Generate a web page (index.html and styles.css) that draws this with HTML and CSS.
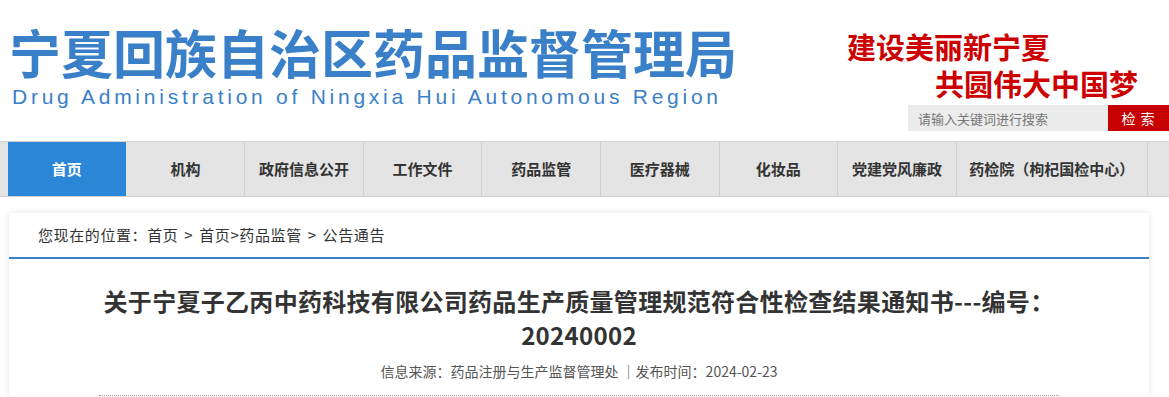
FILE: index.html
```html
<!DOCTYPE html>
<html lang="zh-CN">
<head>
    <meta charset="UTF-8">
    <meta name="viewport" content="width=device-width, initial-scale=1.0">
    <title>宁夏回族自治区药品监督管理局</title>
    <link rel="stylesheet" href="styles.css">
</head>
<body>

    <div class="header">
        <div class="logo">
            <div class="logo-cn">宁夏回族自治区药品监督管理局</div>
            <div class="logo-en">Drug Administration of Ningxia Hui Autonomous Region</div>
        </div>
        <div class="header-right">
            <div class="slogan">
                <div class="slogan-line1">建设美丽新宁夏</div>
                <div class="slogan-line2">共圆伟大中国梦</div>
            </div>
            <div class="search">
                <input class="search-input" type="text" placeholder="请输入关键词进行搜索">
                <button class="search-button">检 索</button>
            </div>
        </div>
    </div>

    <div class="nav">
        <ul class="nav-list">
            <li class="nav-item active">首页</li>
            <li class="nav-item">机构</li>
            <li class="nav-item">政府信息公开</li>
            <li class="nav-item">工作文件</li>
            <li class="nav-item">药品监管</li>
            <li class="nav-item">医疗器械</li>
            <li class="nav-item">化妆品</li>
            <li class="nav-item">党建党风廉政</li>
            <li class="nav-item wide">药检院（枸杞国检中心）</li>
        </ul>
    </div>

    <div class="content">
        <div class="breadcrumb">您现在的位置：首页 &gt; 首页&gt;药品监管 &gt; 公告通告</div>
        <div class="article">
            <h1 class="article-title">关于宁夏子乙丙中药科技有限公司药品生产质量管理规范符合性检查结果通知书---编号：20240002</h1>
            <div class="article-meta">信息来源：药品注册与生产监督管理处 ｜发布时间：2024-02-23</div>
        </div>
    </div>

</body>
</html>
```

FILE: styles.css
```css
/* Общие стили */
body {
    margin: 0;
    padding: 0;
    background-color: #fff;
    font-family: "Noto Sans CJK SC", "Liberation Sans", sans-serif;
    color: #333;
}

/* Шапка */
.header {
    display: flex;
    justify-content: space-between;
    height: 141px;
}

.logo {
    padding: 25px 0 0 9px;
}

.logo-cn {
    font-size: 52px;
    font-weight: 700;
    color: #3a80c9;
    line-height: 54px;
}

.logo-en {
    font-family: "Liberation Sans", sans-serif;
    font-size: 21px;
    color: #3a80c9;
    letter-spacing: 3.75px;
    line-height: 22px;
    margin-top: 7px;
    padding-left: 3px;
}

.header-right {
    display: flex;
    flex-direction: column;
    align-items: flex-end;
}

.slogan {
    width: 322px;
    margin-top: 28px;
    color: #cc0000;
    font-size: 29px;
    font-weight: 700;
    line-height: 37px;
}

.slogan-line2 {
    padding-left: 88px;
}

.search {
    display: flex;
    margin-top: 3px;
}

.search-input {
    width: 200px;
    height: 26px;
    box-sizing: border-box;
    border: none;
    outline: none;
    background-color: #ececec;
    padding: 0 10px;
    font-family: "Noto Sans CJK SC", sans-serif;
    font-size: 13px;
    color: #333;
}

.search-input::placeholder {
    color: #777;
}

.search-button {
    width: 61px;
    height: 26px;
    border: none;
    background-color: #c70000;
    color: #fff;
    font-family: "Noto Sans CJK SC", sans-serif;
    font-size: 14px;
    padding: 0;
    letter-spacing: 1px;
}

/* Навигация */
.nav {
    background-color: #e4e4e4;
    border-top: 1px solid #d2d2d2;
    border-bottom: 1px solid #d2d2d2;
}

.nav-list {
    display: flex;
    list-style: none;
    margin: 0;
    padding: 0 0 0 8px;
}

.nav-item {
    flex: 0 0 118.6px;
    box-sizing: border-box;
    height: 54px;
    line-height: 54px;
    text-align: center;
    font-size: 15px;
    font-weight: 700;
    color: #333;
    border-right: 1px solid #d0d0d0;
}

.nav-item.active {
    background-color: #2b86d7;
    color: #fff;
    border-right-color: #e4e4e4;
}

.nav-item.wide {
    flex: 0 0 191px;
}

/* Контент */
.content {
    margin: 16px 20px 0 9px;
    background-color: #fff;
    box-shadow: 0 0 6px rgba(0, 0, 0, 0.12);
}

.breadcrumb {
    height: 44px;
    line-height: 44px;
    padding-left: 29px;
    font-size: 15px;
    letter-spacing: 0.6px;
    word-spacing: 2px;
    color: #333;
    border-bottom: 2px solid #3a80c9;
}

.article {
    margin: 0 90px;
    padding-top: 25px;
    border-bottom: 1px dotted #999;
    padding-bottom: 14px;
}

.article-title {
    margin: 0 auto;
    max-width: 960px;
    text-align: center;
    font-size: 24px;
    line-height: 34px;
    font-weight: 700;
    letter-spacing: 0.3px;
    color: #333;
}

.article-meta {
    margin-top: 9px;
    text-align: center;
    font-size: 14px;
    line-height: 20px;
    color: #555;
}
```
